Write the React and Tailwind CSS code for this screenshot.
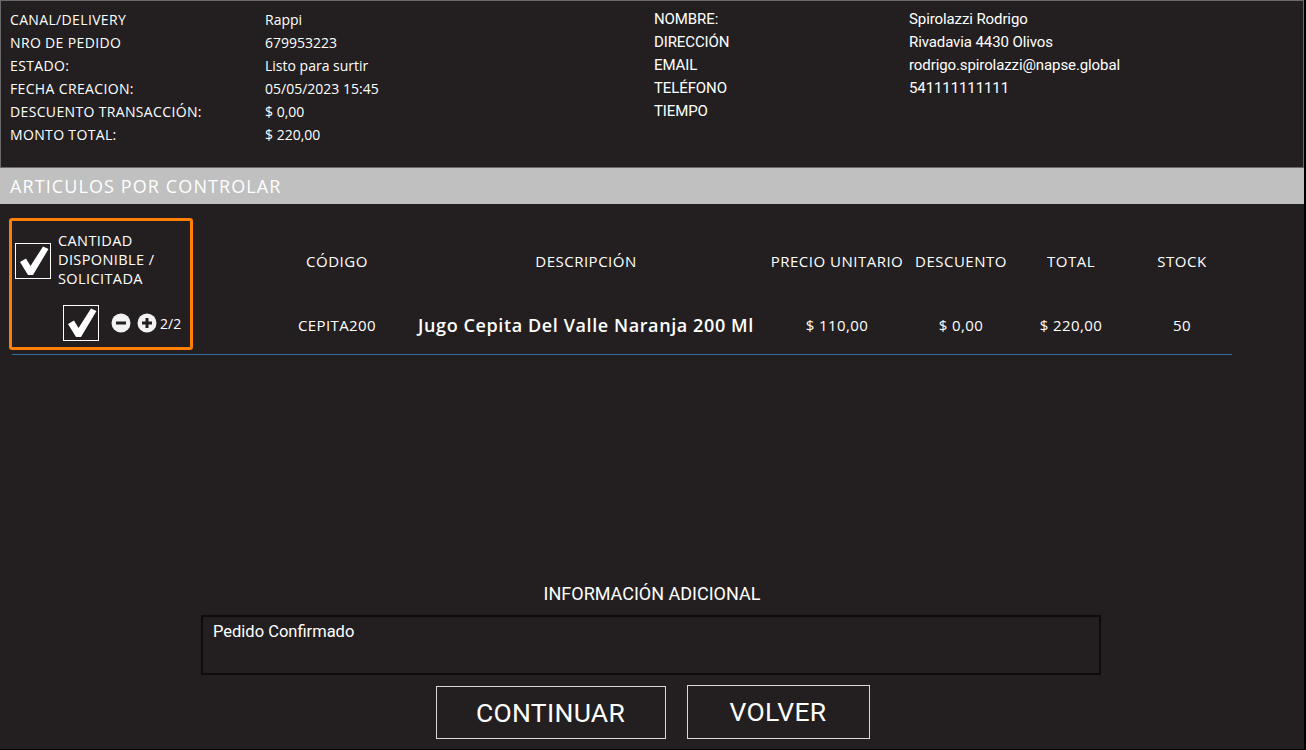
import React from "react";

const Check = ({ size = 36 }) => (
  <div className="border border-white flex items-center justify-center shrink-0" style={{ width: size, height: size }}>
    <svg width={size - 2} height={size - 2} viewBox="0 0 34 34">
      <path d="M4 18 L10 14.5 L14.5 22 L27 2.5 L32.5 5 L17 31 L12 31 Z" fill="#ffffff" />
    </svg>
  </div>
);

const Circle = ({ plus }) => (
  <svg width="20" height="20" viewBox="0 0 20 20">
    <circle cx="10" cy="10" r="9.5" fill="#f2f2f2" />
    <rect x="5" y="8.5" width="10" height="3" fill="#231f20" />
    {plus && <rect x="8.5" y="5" width="3" height="10" fill="#231f20" />}
  </svg>
);

const leftRows = [
  ["CANAL/DELIVERY", "Rappi"],
  ["NRO DE PEDIDO", "679953223"],
  ["ESTADO:", "Listo para surtir"],
  ["FECHA CREACION:", "05/05/2023 15:45"],
  ["DESCUENTO TRANSACCIÓN:", "$ 0,00"],
  ["MONTO TOTAL:", "$ 220,00"],
];
const rightRows = [
  ["NOMBRE:", "Spirolazzi Rodrigo"],
  ["DIRECCIÓN", "Rivadavia 4430 Olivos"],
  ["EMAIL", "rodrigo.spirolazzi@napse.global"],
  ["TELÉFONO", "541111111111"],
  ["TIEMPO", ""],
];

const cols = [
  { w: "w-[150px]", h: "CÓDIGO", v: "CEPITA200" },
  { w: "w-[348px]", h: "DESCRIPCIÓN", v: "Jugo Cepita Del Valle Naranja 200 Ml", big: true },
  { w: "w-[154px]", h: "PRECIO UNITARIO", v: "$ 110,00" },
  { w: "w-[94px]", h: "DESCUENTO", v: "$ 0,00" },
  { w: "w-[126px]", h: "TOTAL", v: "$ 220,00" },
  { w: "w-[96px]", h: "STOCK", v: "50" },
];

export default function App() {
  const mont = { fontFamily: '"Open Sans", "Noto Sans", sans-serif' };
  const cond = { fontFamily: 'Roboto, "Liberation Sans", sans-serif' };
  return (
    <div className="w-[1306px] h-[750px] bg-[#231f20] text-white flex flex-col overflow-hidden border-r-2 border-b border-r-black border-b-black">
      {/* Top panel */}
      <div className="h-[168px] border border-[#6b6b6b] flex pt-[7px] shrink-0">
        <div className="w-[643px] pl-[9px] flex flex-col text-[14px] font-medium leading-[23px] tracking-[0.35px]" style={mont}>
          {leftRows.map(([a, b]) => (
            <div key={a} className="flex">
              <div className="w-[255px] whitespace-nowrap">{a}</div>
              <div className="tracking-[0px]">{b}</div>
            </div>
          ))}
        </div>
        <div className="pl-[10px] flex flex-col text-[15px] leading-[23px] tracking-[-0.1px]" style={cond}>
          {rightRows.map(([a, b]) => (
            <div key={a} className="flex">
              <div className="w-[255px]">{a}</div>
              <div>{b}</div>
            </div>
          ))}
        </div>
      </div>
      {/* Grey bar */}
      <div className="h-[36px] bg-[#c0c0c0] flex items-center pl-[10px] text-[18px] font-medium tracking-[1.1px] text-white shrink-0" style={mont}>
        ARTICULOS POR CONTROLAR
      </div>

      {/* Table */}
      <div className="flex mt-[14px] ml-[9px]" style={mont}>
        <div className="w-[184px] h-[132px] border-[3px] border-[#ff7f00] rounded-[3px] flex flex-col">
          <div className="flex items-center pl-[3px] pt-[13px] gap-[7px]">
            <Check />
            <div className="text-[14.5px] font-medium leading-[19px] mt-[-3px] tracking-[0.4px] whitespace-nowrap">
              CANTIDAD
              <br />
              DISPONIBLE /
              <br />
              SOLICITADA
            </div>
          </div>
          <div className="flex items-center pl-[51px] mt-[17px]">
            <Check />
            <div className="ml-[12px] flex items-center gap-[6px]">
              <Circle />
              <Circle plus />
            </div>
            <div className="ml-[3px] text-[14px] font-medium">2/2</div>
          </div>
        </div>
        <div className="ml-[69px] flex flex-col">
          <div className="flex h-[86px] items-center text-[15px] font-medium tracking-[0.5px]">
            {cols.map((c) => (
              <div key={c.h} className={`${c.w} text-center whitespace-nowrap`}>{c.h}</div>
            ))}
          </div>
          <div className="flex h-[42px] items-center">
            {cols.map((c) => (
              <div
                key={c.h}
                className={`${c.w} text-center whitespace-nowrap ${c.big ? "text-[18px] font-semibold tracking-[0.6px]" : "text-[15px] font-medium tracking-[0.4px]"}`}
              >
                {c.v}
              </div>
            ))}
          </div>
        </div>
      </div>
      <div className="ml-[12px] mt-[4px] w-[1220px] h-[1px] bg-[#2f6fa3]" />

      <div className="flex-1" />

      {/* Bottom info */}
      <div className="flex flex-col items-center pb-[10px]" style={cond}>
        <div className="text-[18px] leading-[20px] mb-[11px]">INFORMACIÓN ADICIONAL</div>
        <div className="w-[900px] h-[60px] border-2 border-[#0d0b0c] px-[10px] pt-[3px] text-[16.5px] ml-[-2px]">
          Pedido Confirmado
        </div>
        <div className="flex gap-[21px] mt-[11px] ml-[1px]">
          <button className="w-[230px] h-[53px] border border-[#d9d9d9] text-[26.5px] tracking-[0.3px]">CONTINUAR</button>
          <button className="w-[183px] h-[54px] border border-[#d9d9d9] text-[26.5px] tracking-[0.3px] mt-[-1px]">VOLVER</button>
        </div>
      </div>
    </div>
  );
}
